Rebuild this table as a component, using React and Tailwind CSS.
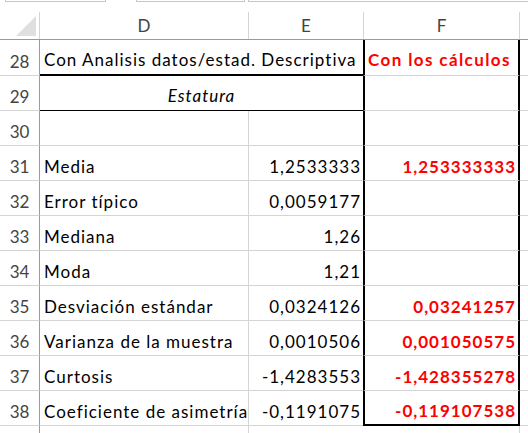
import React from "react";

const rows = [
  { n: 31, d: "Media", e: "1,2533333", f: "1,253333333" },
  { n: 32, d: "Error típico", e: "0,0059177", f: "" },
  { n: 33, d: "Mediana", e: "1,26", f: "" },
  { n: 34, d: "Moda", e: "1,21", f: "" },
  { n: 35, d: "Desviación estándar", e: "0,0324126", f: "0,03241257" },
  { n: 36, d: "Varianza de la muestra", e: "0,0010506", f: "0,001050575" },
  { n: 37, d: "Curtosis", e: "-1,4283553", f: "-1,428355278" },
  { n: 38, d: "Coeficiente de asimetría", e: "-0,1191075", f: "-0,119107538" },
];

function RowHdr({ n }) {
  return (
    <div className="w-[40px] shrink-0 border-r border-b border-r-[#9b9b9b] border-b-[#d4d4d4] flex items-end justify-center pb-[3px] text-[#444444] tracking-normal">
      {n}
    </div>
  );
}

function Rest() {
  return <div className="flex-1 border-b border-[#d4d4d4]" />;
}

export default function App() {
  return (
    <div className="w-[528px] h-[433px] bg-white overflow-hidden text-[17px] leading-[20px] text-black font-['Lato',sans-serif]">
      {/* top strip */}
      <div className="h-[12px] relative">
        <div className="absolute left-[5px] top-0 w-[101px] h-[2px] border-x border-b border-[#c6c6c6]" />
        <div className="absolute left-[136px] top-0 w-[109px] h-[2px] border-x border-b border-[#c6c6c6]" />
        <div className="absolute left-[248px] top-0 w-[290px] h-[2px] border-x border-b border-[#c6c6c6]" />
      </div>
      {/* column header */}
      <div className="flex h-[28px] border-b border-[#9b9b9b] text-[#444444]">
        <div className="w-[40px] shrink-0 border-r border-[#d4d4d4] relative">
          <svg className="absolute left-[16px] top-[4px]" width="20" height="20" viewBox="0 0 20 20">
            <polygon points="20,0 20,20 0,20" fill="#dfdfdf" />
          </svg>
        </div>
        <div className="w-[209px] shrink-0 border-r border-[#d4d4d4] flex items-end justify-center pb-[3px]">D</div>
        <div className="w-[115px] shrink-0 border-r border-[#d4d4d4] flex items-end justify-center pb-[3px]">E</div>
        <div className="w-[156px] shrink-0 border-r border-[#d4d4d4] flex items-end justify-center pb-[3px]">F</div>
        <div className="flex-1" />
      </div>
      <div className="tracking-[1px]">
        {/* row 28 */}
        <div className="flex h-[36px]">
          <RowHdr n={28} />
          <div className="w-[323px] shrink-0 border-b-2 border-black flex items-end pl-[4px] pb-[4px] whitespace-nowrap">
            Con Analisis datos/estad. Descriptiva
          </div>
          <div className="w-[157px] shrink-0 border-x-2 border-black border-b border-b-[#d4d4d4] flex items-end pl-[3px] pb-[5px] font-bold text-[#ff0000] whitespace-nowrap tracking-[1.4px]">
            Con los cálculos
          </div>
          <Rest />
        </div>
        {/* row 29 */}
        <div className="flex h-[35px]">
          <RowHdr n={29} />
          <div className="w-[323px] shrink-0 border-b border-black flex items-end justify-center pb-[4px] italic">
            Estatura
          </div>
          <div className="w-[157px] shrink-0 border-x-2 border-black border-b border-b-[#d4d4d4]" />
          <Rest />
        </div>
        {/* row 30 */}
        <div className="flex h-[35px]">
          <RowHdr n={30} />
          <div className="w-[209px] shrink-0 border-r border-b border-[#d4d4d4]" />
          <div className="w-[114px] shrink-0 border-b border-[#d4d4d4]" />
          <div className="w-[157px] shrink-0 border-x-2 border-black border-b border-b-[#d4d4d4]" />
          <Rest />
        </div>
        {rows.map((r, i) => (
          <div key={r.n} className="flex h-[35px]">
            <RowHdr n={r.n} />
            <div className="w-[209px] shrink-0 border-r border-b border-[#d4d4d4] flex items-end pl-[4px] pb-[3px] whitespace-nowrap">
              {r.d}
            </div>
            <div className="w-[114px] shrink-0 border-b border-[#d4d4d4] flex items-end justify-end pr-[2px] pb-[3px] whitespace-nowrap">
              {r.e}
            </div>
            <div
              className={
                "w-[157px] shrink-0 border-x-2 border-black flex items-end justify-end pr-[2px] pb-[3px] font-bold text-[#ff0000] whitespace-nowrap " +
                (i === rows.length - 1 ? "border-b-2 border-b-black" : "border-b border-b-[#d4d4d4]")
              }
            >
              {r.f}
            </div>
            <Rest />
          </div>
        ))}
      </div>
      {/* partial row below */}
      <div className="flex h-[10px]">
        <div className="w-[40px] shrink-0 border-r border-[#9b9b9b]" />
        <div className="w-[209px] shrink-0 border-r border-[#d4d4d4]" />
        <div className="w-[114px] shrink-0" />
        <div className="w-[157px] shrink-0 border-r border-[#d4d4d4]" />
      </div>
    </div>
  );
}
